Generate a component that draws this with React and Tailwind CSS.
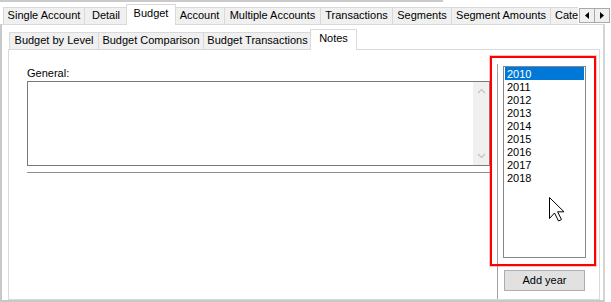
import React from "react";

const mainTabs = [
  { label: "Single Account", w: "w-[82px]" },
  { label: "Detail", w: "w-[44px]" },
  { label: "Budget", w: "w-[50px]", active: true },
  { label: "Account", w: "w-[51px]" },
  { label: "Multiple Accounts", w: "w-[97px]" },
  { label: "Transactions", w: "w-[73px]" },
  { label: "Segments", w: "w-[60px]" },
  { label: "Segment Amounts", w: "w-[100px]" },
  { label: "Categories", w: "w-[70px]", left: true },
];

const subTabs = [
  { label: "Budget by Level", w: "w-[90px]" },
  { label: "Budget Comparison", w: "w-[106px]" },
  { label: "Budget Transactions", w: "w-[109px]" },
  { label: "Notes", w: "w-[47px]", active: true },
];

const years = ["2010", "2011", "2012", "2013", "2014", "2015", "2016", "2017", "2018"];

// one tab of a windows style tab strip
const Tab = ({ tab, first }) => {
  if (tab.active) {
    return (
      <div
        className={`relative z-10 shrink-0 h-[21px] -mb-px ${first ? "" : "-ml-[2px] -mr-px"} ${tab.w} bg-white border border-b-0 border-[#d9d9d9] pt-[2px] text-center leading-[13px] whitespace-nowrap`}
      >
        {tab.label}
      </div>
    );
  }
  return (
    <div
      className={`shrink-0 h-[17px] ${first ? "" : "-ml-px"} ${tab.w} bg-[#f0f0f0] border border-b-0 border-[#d9d9d9] pt-px leading-[13px] whitespace-nowrap ${tab.left ? "pl-[4px] text-left" : "text-center"}`}
    >
      {tab.label}
    </div>
  );
};

const Chevron = ({ down }) => (
  <svg width="9" height="6" viewBox="0 0 9 6">
    <path
      d={down ? "M1 1 L4.5 4.5 L8 1" : "M1 5 L4.5 1.5 L8 5"}
      fill="none"
      stroke="#c2c2c2"
      strokeWidth="1.2"
    />
  </svg>
);

const App = () => {
  return (
    <div className="relative w-[611px] h-[302px] overflow-hidden bg-white flex flex-col font-['Liberation_Sans',Arial,sans-serif] text-[11px] text-black">
      <div className="h-[2px] w-[443px] shrink-0 bg-[#cacaca]" />

      {/* main tab strip */}
      <div className="relative h-[22px] shrink-0 flex items-end pl-[3px]">
        {mainTabs.map((tab, i) => (
          <Tab key={tab.label} tab={tab} first={i === 0} />
        ))}
        <div className="absolute left-[578px] top-[-2px] h-[24px] w-[33px] bg-white pt-[8px] pl-px z-20">
          <div className="flex h-[15px] w-[31px] border border-[#a9a9a9] bg-[#f0f0f0]">
            <div className="flex-1 flex items-center justify-center border-r border-[#a9a9a9]">
              <svg width="4" height="7" viewBox="0 0 4 7">
                <path d="M4 0 L0 3.5 L4 7 Z" fill="#000" />
              </svg>
            </div>
            <div className="flex-1 flex items-center justify-center">
              <svg width="4" height="7" viewBox="0 0 4 7">
                <path d="M0 0 L4 3.5 L0 7 Z" fill="#000" />
              </svg>
            </div>
          </div>
        </div>
      </div>

      {/* outer panel */}
      <div className="flex-1 w-[605px] flex flex-col border-t border-t-[#d9d9d9] border-l-2 border-l-[#c8c8c8] border-b-2 border-b-[#c8c8c8] border-r-2 border-r-[#d4d4d4]">
        <div className="h-[24px] shrink-0 flex items-end pl-[7px]">
          {subTabs.map((tab, i) => (
            <Tab key={tab.label} tab={tab} first={i === 0} />
          ))}
        </div>

        <div className="flex-1 ml-[6px] w-[592px] flex border border-[#d9d9d9]">
          {/* notes */}
          <div className="pl-[18px] pt-[17px] w-[488px] shrink-0">
            <div className="h-[14px] leading-[13px]">General:</div>
            <div className="h-[85px] w-[463px] border border-[#7a7a7a] flex justify-end">
              <div className="w-[16px] h-full bg-[#f0f0f0] flex flex-col items-center justify-between pt-[6px] pb-[6px]">
                <Chevron />
                <Chevron down />
              </div>
            </div>
            <div className="mt-[6px] h-px w-[463px] bg-[#8e8e8e]" />
          </div>

          {/* years */}
          <div className="mt-[14px] border-l border-[#a0a0a0] pl-[5px] pt-[2px]">
            <div className="w-[83px] h-[192px] border border-[#828790] px-px">
              {years.map((y, i) => (
                <div
                  key={y}
                  className={`h-[13px] leading-[15px] pl-[2px] ${i === 0 ? "bg-[#0078d7] text-white" : ""}`}
                >
                  {y}
                </div>
              ))}
            </div>
            <button className="mt-[12px] ml-px w-[81px] h-[21px] border border-[#adadad] bg-[#e1e1e1] text-[11px] leading-[13px]">
              Add year
            </button>
          </div>
        </div>
      </div>

      {/* red annotation */}
      <div className="absolute left-[490px] top-[56px] w-[106px] h-[210px] border-2 border-[#ff0000] shadow-[0_0_0_1px_rgba(255,80,80,0.35)]" />

      {/* mouse pointer */}
      <svg
        className="absolute left-[548px] top-[196px]"
        width="18"
        height="27"
        viewBox="0 0 18 27"
      >
        <path
          d="M1.5 1.5 L1.5 22.5 L6.5 17 L10.5 25 L13.5 23.6 L9.6 15.8 L16 15.8 Z"
          fill="#fff"
          stroke="#000"
          strokeWidth="1"
          strokeLinejoin="miter"
        />
      </svg>
    </div>
  );
};

export default App;
